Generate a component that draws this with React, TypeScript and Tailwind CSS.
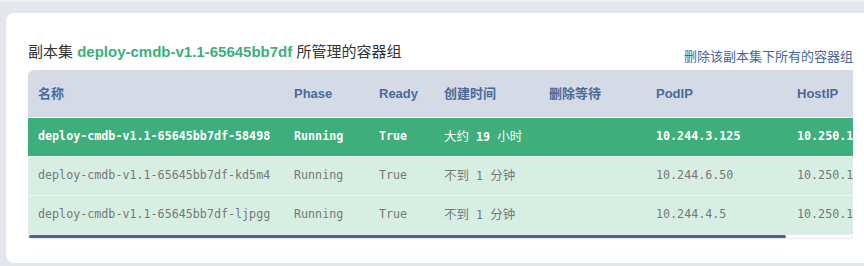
import React from "react";

const columns = [
  { key: "name", label: "名称", w: "w-[256px]" },
  { key: "phase", label: "Phase", w: "w-[85px]" },
  { key: "ready", label: "Ready", w: "w-[65px]" },
  { key: "created", label: "创建时间", w: "w-[105px]" },
  { key: "deleting", label: "删除等待", w: "w-[107px]" },
  { key: "podIP", label: "PodIP", w: "w-[141px]" },
  { key: "hostIP", label: "HostIP", w: "w-[140px]" },
];

const pods = [
  {
    name: "deploy-cmdb-v1.1-65645bb7df-58498",
    phase: "Running",
    ready: "True",
    created: "大约 19 小时",
    deleting: "",
    podIP: "10.244.3.125",
    hostIP: "10.250.11.14",
    active: true,
  },
  {
    name: "deploy-cmdb-v1.1-65645bb7df-kd5m4",
    phase: "Running",
    ready: "True",
    created: "不到 1 分钟",
    deleting: "",
    podIP: "10.244.6.50",
    hostIP: "10.250.12.3",
    active: false,
  },
  {
    name: "deploy-cmdb-v1.1-65645bb7df-ljpgg",
    phase: "Running",
    ready: "True",
    created: "不到 1 分钟",
    deleting: "",
    podIP: "10.244.4.5",
    hostIP: "10.250.11.9",
    active: false,
  },
];

// CJK runs render a bit larger and not bold, like the fallback font in the original
const renderCell = (text: string) =>
  text.split(/([\u4e00-\u9fff]+)/).map((part, i) =>
    /[\u4e00-\u9fff]/.test(part) ? (
      <span key={i} className="text-[12.5px] font-normal">
        {part}
      </span>
    ) : (
      <span key={i}>{part}</span>
    )
  );

const App = () => {
  return (
    <div className="w-[864px] h-[266px] overflow-hidden bg-[#e3e6ec] border-t-2 border-[#eceef2] pl-[6px] pt-[11px]">
      <div className="w-[900px] h-[250px] bg-white rounded-l-lg pl-[22px] pt-[29px]">
        <div className="w-[825px]">
          {/* title + action */}
          <div className="flex items-end justify-between mb-[5px]">
            <h3 className="mb-[3px] text-[15px] leading-[20px] text-[#333] font-['Liberation_Sans','Noto_Sans_CJK_SC',sans-serif]">
              副本集 <span className="font-bold text-[#3dae7d]">deploy-cmdb-v1.1-65645bb7df</span> 所管理的容器组
            </h3>
            <a className="text-[13px] leading-[18px] text-[#4a6594] font-['Noto_Sans_CJK_SC',sans-serif] cursor-pointer">
              删除该副本集下所有的容器组
            </a>
          </div>

          {/* table */}
          <div className="overflow-hidden rounded-tl-[6px]">
            <div className="w-[899px]">
              <div className="flex h-[47px] items-center bg-[#d5dbe6] text-[13px] font-bold text-[#4a6a9a] font-['Liberation_Sans','Noto_Sans_CJK_SC',sans-serif]">
                {columns.map((c) => (
                  <div key={c.key} className={`${c.w} shrink-0 pl-[10px]`}>
                    {c.label}
                  </div>
                ))}
              </div>
              {pods.map((p) => (
                <div
                  key={p.name}
                  className={`flex h-[39px] items-center border-t border-[#eef7f2] text-[11.7px] font-['DejaVu_Sans_Mono','Noto_Sans_CJK_SC',monospace] ${
                    p.active ? "bg-[#3dae7c] text-white font-bold" : "bg-[#d7efe3] text-[#777]"
                  }`}
                >
                  {columns.map((c) => (
                    <div key={c.key} className={`${c.w} shrink-0 pl-[10px] whitespace-nowrap`}>
                      {renderCell(String(p[c.key as keyof typeof p]))}
                    </div>
                  ))}
                </div>
              ))}
            </div>
          </div>

          {/* horizontal scrollbar */}
          <div className="h-[5px] bg-white border border-[#e6e9ef] rounded-[3px]">
            <div className="h-full w-[757px] bg-[#4b6593] rounded-[3px]" />
          </div>
        </div>
      </div>
    </div>
  );
};

export default App;
